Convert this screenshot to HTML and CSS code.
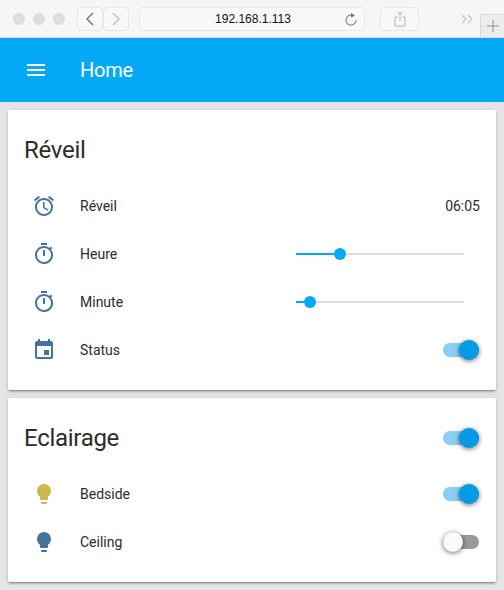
FILE: index.html
```
<!DOCTYPE html>
<html lang="fr">
<head>
<meta charset="utf-8">
<title>Home</title>
<link rel="stylesheet" href="styles.css">
</head>
<body>
<div class="browser">
  <div class="lights"><i class="light"></i><i class="light"></i><i class="light"></i></div>
  <div class="nav">
    <div class="navbtn"><svg width="10" height="16" viewBox="0 0 10 16"><path d="M8 2 2 8l6 6" class="chev dark"/></svg></div>
    <div class="navbtn"><svg width="10" height="16" viewBox="0 0 10 16"><path d="M2 2l6 6-6 6" class="chev light-chev"/></svg></div>
  </div>
  <div class="address">
    <span class="url">192.168.1.113</span>
    <svg class="reload" width="14" height="14" viewBox="0 0 14 14"><path d="M7.5 2.2A5 5 0 1 0 12 7" class="reload-line"/><path d="M7 0l4 2.4L7 4.8z" class="reload-tip"/></svg>
  </div>
  <div class="share"><svg width="12" height="16" viewBox="0 0 12 16"><path d="M4 6H1v9h10V6H8M6 10V1M3.8 3.2 6 1l2.2 2.2" class="share-line"/></svg></div>
  <div class="more"><svg width="12" height="10" viewBox="0 0 12 10"><path d="M1 1l4 4-4 4M7 1l4 4-4 4" class="more-line"/></svg></div>
  <div class="newtab"><svg width="12" height="12" viewBox="0 0 12 12"><path d="M6 0v12M0 6h12" class="plus"/></svg></div>
</div>
<header class="appbar">
  <svg class="menu" width="24" height="24" viewBox="0 0 24 24"><path d="M3 18h18v-2H3v2zm0-5h18v-2H3v2zm0-7v2h18V6H3z"/></svg>
  <div class="apptitle">Home</div>
</header>
<main class="content">
  <section class="card">
    <div class="cardhead"><h2 class="cardtitle">Réveil</h2></div>
    <div class="row">
      <svg class="icon blue" viewBox="0 0 24 24"><path d="M22 5.72l-4.6-3.86-1.29 1.53 4.6 3.86L22 5.72zM7.88 3.39 6.6 1.86 2 5.71l1.29 1.53 4.59-3.85zM12.5 8H11v6l4.75 2.85.75-1.23-4-2.37V8zM12 4c-4.97 0-9 4.03-9 9s4.03 9 9 9 9-4.03 9-9-4.03-9-9-9zm0 16c-3.87 0-7-3.13-7-7s3.13-7 7-7 7 3.13 7 7-3.13 7-7 7z"/></svg>
      <span class="label">Réveil</span>
      <span class="value">06:05</span>
    </div>
    <div class="row">
      <svg class="icon blue" viewBox="0 0 24 24"><path d="M15 1H9v2h6V1zm-4 13h2V8h-2v6zm8.03-6.61 1.42-1.42c-.43-.51-.9-.99-1.41-1.41l-1.42 1.42A8.962 8.962 0 0 0 12 4c-4.97 0-9 4.03-9 9s4.02 9 9 9a8.994 8.994 0 0 0 7.03-14.61zM12 20c-3.87 0-7-3.13-7-7s3.13-7 7-7 7 3.13 7 7-3.13 7-7 7z"/></svg>
      <span class="label">Heure</span>
      <div class="slider"><div class="fill" style="width:44px"></div><div class="thumb" style="left:44px"></div></div>
    </div>
    <div class="row">
      <svg class="icon blue" viewBox="0 0 24 24"><path d="M15 1H9v2h6V1zm-4 13h2V8h-2v6zm8.03-6.61 1.42-1.42c-.43-.51-.9-.99-1.41-1.41l-1.42 1.42A8.962 8.962 0 0 0 12 4c-4.97 0-9 4.03-9 9s4.02 9 9 9a8.994 8.994 0 0 0 7.03-14.61zM12 20c-3.87 0-7-3.13-7-7s3.13-7 7-7 7 3.13 7 7-3.13 7-7 7z"/></svg>
      <span class="label">Minute</span>
      <div class="slider"><div class="fill" style="width:14px"></div><div class="thumb" style="left:14px"></div></div>
    </div>
    <div class="row">
      <svg class="icon blue" viewBox="0 0 24 24"><path d="M17 12h-5v5h5v-5zM16 1v2H8V1H6v2H5c-1.11 0-1.99.9-1.99 2L3 19a2 2 0 0 0 2 2h14c1.1 0 2-.9 2-2V5c0-1.1-.9-2-2-2h-1V1h-2zm3 18H5V8h14v11z"/></svg>
      <span class="label">Status</span>
      <div class="switch on"><div class="knob"></div></div>
    </div>
  </section>
  <section class="card">
    <div class="cardhead">
      <h2 class="cardtitle">Eclairage</h2>
      <div class="switch on"><div class="knob"></div></div>
    </div>
    <div class="row">
      <svg class="icon yellow" viewBox="0 0 24 24"><path d="M12 2a7 7 0 0 0-7 7c0 2.38 1.19 4.47 3 5.74V17a1 1 0 0 0 1 1h6a1 1 0 0 0 1-1v-2.26c1.81-1.27 3-3.36 3-5.74a7 7 0 0 0-7-7zM9 21a1 1 0 0 0 1 1h4a1 1 0 0 0 1-1v-1H9v1z"/></svg>
      <span class="label">Bedside</span>
      <div class="switch on"><div class="knob"></div></div>
    </div>
    <div class="row">
      <svg class="icon blue" viewBox="0 0 24 24"><path d="M12 2a7 7 0 0 0-7 7c0 2.38 1.19 4.47 3 5.74V17a1 1 0 0 0 1 1h6a1 1 0 0 0 1-1v-2.26c1.81-1.27 3-3.36 3-5.74a7 7 0 0 0-7-7zM9 21a1 1 0 0 0 1 1h4a1 1 0 0 0 1-1v-1H9v1z"/></svg>
      <span class="label">Ceiling</span>
      <div class="switch"><div class="knob"></div></div>
    </div>
  </section>
</main>
</body>
</html>
```
FILE: styles.css
```
* { box-sizing: border-box; }
html, body { margin: 0; height: 100%; }
body {
  background: #e5e5e5;
  font-family: Roboto, "Liberation Sans", sans-serif;
  color: #2c2c2c;
  overflow: hidden;
}
.browser {
  height: 38px;
  background: #f6f6f6;
  border-bottom: 1px solid #dcdcdc;
  display: flex;
  align-items: flex-start;
  position: relative;
}
.lights { display: flex; gap: 8px; margin: 13px 0 0 13px; }
.light { width: 12px; height: 12px; border-radius: 50%; background: #dddddd; display: block; }
.nav { display: flex; margin: 7px 0 0 12px; }
.navbtn {
  width: 26px;
  height: 24px;
  border: 1px solid #e8e8e8;
  border-radius: 4px;
  background: #f8f8f8;
  display: flex;
  align-items: center;
  justify-content: center;
}
.chev { fill: none; stroke-width: 1.5; }
.dark { stroke: #7b7b7b; }
.light-chev { stroke: #c4c4c4; }
.address {
  width: 226px;
  height: 24px;
  margin: 7px 0 0 10px;
  border: 1px solid #e9e9e9;
  border-radius: 4px;
  background: #f8f8f8;
  position: relative;
  display: flex;
  align-items: center;
  justify-content: center;
  padding-left: 2px;
}
.url { font-family: "Liberation Sans", sans-serif; font-size: 12px; color: #111111; }
.reload { position: absolute; right: 6px; top: 5px; }
.reload-line { fill: none; stroke: #8a8a8a; stroke-width: 1.2; }
.reload-tip { fill: #777777; }
.share {
  width: 39px;
  height: 24px;
  margin: 7px 0 0 15px;
  border: 1px solid #e9e9e9;
  border-radius: 4px;
  background: #f8f8f8;
  display: flex;
  align-items: center;
  justify-content: center;
}
.share-line { fill: none; stroke: #b5b5b5; stroke-width: 1; }
.more { margin: 14px 0 0 42px; display: flex; }
.more-line { fill: none; stroke: #c4c4c4; stroke-width: 1.1; }
.newtab {
  position: absolute;
  right: 0;
  top: 14px;
  width: 24px;
  height: 23px;
  background: #ececec;
  border: 1px solid #d8d8d8;
  border-bottom: 0;
  border-right: 0;
  display: flex;
  align-items: center;
  justify-content: center;
}
.plus { fill: none; stroke: #8e8e8e; stroke-width: 1; }
.appbar {
  height: 64px;
  background: #03a9f4;
  display: flex;
  align-items: center;
  padding-left: 24px;
  color: #ffffff;
}
.menu { fill: #ffffff; display: block; }
.apptitle { margin-left: 32px; font-size: 20px; line-height: 28px; font-weight: 400; letter-spacing: -0.01em; }
.content { padding: 8px; display: flex; flex-direction: column; gap: 8px; }
.card {
  background: #ffffff;
  border-radius: 2px;
  padding: 0 16px 16px;
  box-shadow: 0 2px 2px rgba(0,0,0,.14), 0 1px 5px rgba(0,0,0,.12), 0 3px 1px -2px rgba(0,0,0,.2);
}
.cardhead {
  height: 72px;
  padding: 24px 0 16px;
  display: flex;
  align-items: center;
  justify-content: space-between;
}
.cardtitle { margin: 0; font-size: 24px; line-height: 32px; font-weight: 400; letter-spacing: -0.012em; }
.row { height: 48px; display: flex; align-items: center; padding-left: 8px; }
.icon { width: 24px; height: 24px; flex: none; display: block; }
.blue { fill: #44739e; }
.yellow { fill: #c9b94f; }
.label { margin-left: 24px; font-size: 14px; flex: 1; }
.value { font-size: 14px; }
.slider {
  width: 168px;
  height: 2px;
  margin-right: 16px;
  background: #dddddd;
  position: relative;
}
.fill { height: 2px; background: #03a9f4; }
.thumb {
  position: absolute;
  top: -5px;
  width: 12px;
  height: 12px;
  margin-left: -6px;
  border-radius: 50%;
  background: #03a9f4;
}
.switch {
  width: 36px;
  height: 14px;
  margin-right: 1px;
  border-radius: 7px;
  background: #9a9a9a;
  position: relative;
}
.switch.on { background: #8acff3; }
.knob {
  position: absolute;
  top: -3px;
  left: 0;
  width: 20px;
  height: 20px;
  border-radius: 50%;
  background: #fafafa;
  box-shadow: 0 1px 5px rgba(0,0,0,.6);
}
.switch.on .knob { left: 16px; background: #039be5; }
```
